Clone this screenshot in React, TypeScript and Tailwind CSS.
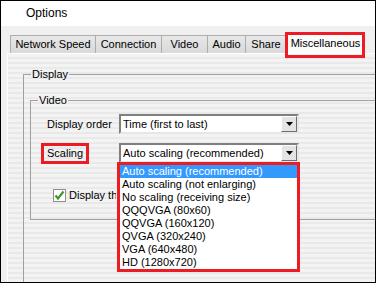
import React from 'react'

const tabs = [
  { label: 'Network Speed', w: 'w-[86px]' },
  { label: 'Connection', w: 'w-[67px]' },
  { label: 'Video', w: 'w-[47px]' },
  { label: 'Audio', w: 'w-[39px]' },
  { label: 'Share', w: 'w-[42px]' },
]

const scalingOptions = [
  'Auto scaling (recommended)',
  'Auto scaling (not enlarging)',
  'No scaling (receiving size)',
  'QQQVGA (80x60)',
  'QQVGA (160x120)',
  'QVGA (320x240)',
  'VGA (640x480)',
  'HD (1280x720)',
]

function ComboBox({ value }: { value: string }) {
  return (
    <div className="w-[180px] h-[20px] flex items-center bg-white border-2 border-t-[#7f7f7f] border-l-[#7f7f7f] border-r-[#e6e6e6] border-b-[#e6e6e6]">
      <span className="flex-1 pl-[2px] whitespace-nowrap overflow-hidden">{value}</span>
      <div className="w-[16px] h-[16px] flex items-center justify-center bg-[#e4e4e4] border border-t-white border-l-white border-r-[#6e6e6e] border-b-[#6e6e6e]">
        <svg width="7" height="4" viewBox="0 0 7 4">
          <path d="M0 0h7L3.5 4z" fill="#000" />
        </svg>
      </div>
    </div>
  )
}

export default function App() {
  return (
    <div className="relative w-[376px] h-[283px] border border-black bg-[#f0f0f0] overflow-hidden flex flex-col text-[11px] leading-[13px] text-black font-['Liberation_Sans',Arial,sans-serif]">
      {/* Title bar */}
      <div className="h-[25px] shrink-0 bg-white flex items-center pl-[25px] text-[12px]">Options</div>

      {/* Tabs */}
      <div className="h-[27px] shrink-0 pl-[9px] flex items-end">
        {tabs.map((t, i) => (
          <div
            key={t.label}
            className={`${t.w} ${i > 0 ? '-ml-px' : ''} h-[18px] flex items-center justify-center border border-b-0 border-[#adadad] bg-[linear-gradient(#e8e8e8,#d9d9d9)] whitespace-nowrap`}
          >
            {t.label}
          </div>
        ))}
        <div className="-ml-px w-[79px] h-[21px] flex items-center justify-center border border-b-0 border-[#adadad] bg-[#fbfbfb] whitespace-nowrap">
          Miscellaneous
        </div>
      </div>

      {/* Tab panel */}
      <div className="flex-1 ml-[6px] border-l border-t border-white bg-[image:repeating-linear-gradient(180deg,#f3f3f3_0px,#f3f3f3_3px,#e9e9e9_3px,#e9e9e9_5px)]">
        <fieldset className="ml-[15px] mt-[14px] w-[420px] h-[300px] border border-[#a0a0a0]">
          <legend className="ml-[7px] px-[1px] leading-[13px]">Display</legend>
          <fieldset className="ml-[6px] mt-[13px] w-[400px] h-[126px] border border-[#a0a0a0]">
            <legend className="ml-[7px] px-[1px] leading-[13px]">Video</legend>
            <div className="pl-[16px] pt-[7px] flex flex-col">
              <div className="flex items-center">
                <span className="w-[72px]">Display order</span>
                <ComboBox value="Time (first to last)" />
              </div>
              <div className="flex items-center mt-[9px]">
                <span className="w-[72px]">Scaling</span>
                <ComboBox value="Auto scaling (recommended)" />
              </div>
              <div className="flex items-center mt-[26px] pl-[6px] gap-[3px]">
                <div className="w-[13px] h-[13px] bg-white border border-[#8f8f8f] flex items-center justify-center">
                  <svg width="11" height="11" viewBox="0 0 11 11">
                    <path d="M1.5 5.5 L4 8.5 L9.5 1.5" fill="none" stroke="#3f9a2d" strokeWidth="2.2" />
                  </svg>
                </div>
                {/* the rest of this label sits under the open list */}
                <span className="w-[47px] overflow-hidden whitespace-nowrap">Display the</span>
              </div>
            </div>
          </fieldset>
        </fieldset>
      </div>

      {/* Annotation boxes */}
      <div className="absolute left-[284px] top-[31px] w-[80px] h-[26px] border-[3px] border-[#ed1c24]" />
      <div className="absolute left-[40px] top-[142px] w-[48px] h-[21px] border-[3px] border-[#ed1c24]" />

      {/* Open dropdown list */}
      <div className="absolute left-[116px] top-[161px] w-[183px] h-[110px] border-[3px] border-[#ed1c24] bg-white">
        {scalingOptions.map((o, i) => (
          <div
            key={o}
            className={`h-[13px] leading-[13px] pl-[2px] whitespace-nowrap ${i === 0 ? 'bg-[#3399ff] text-white' : ''}`}
          >
            {o}
          </div>
        ))}
      </div>
    </div>
  )
}
